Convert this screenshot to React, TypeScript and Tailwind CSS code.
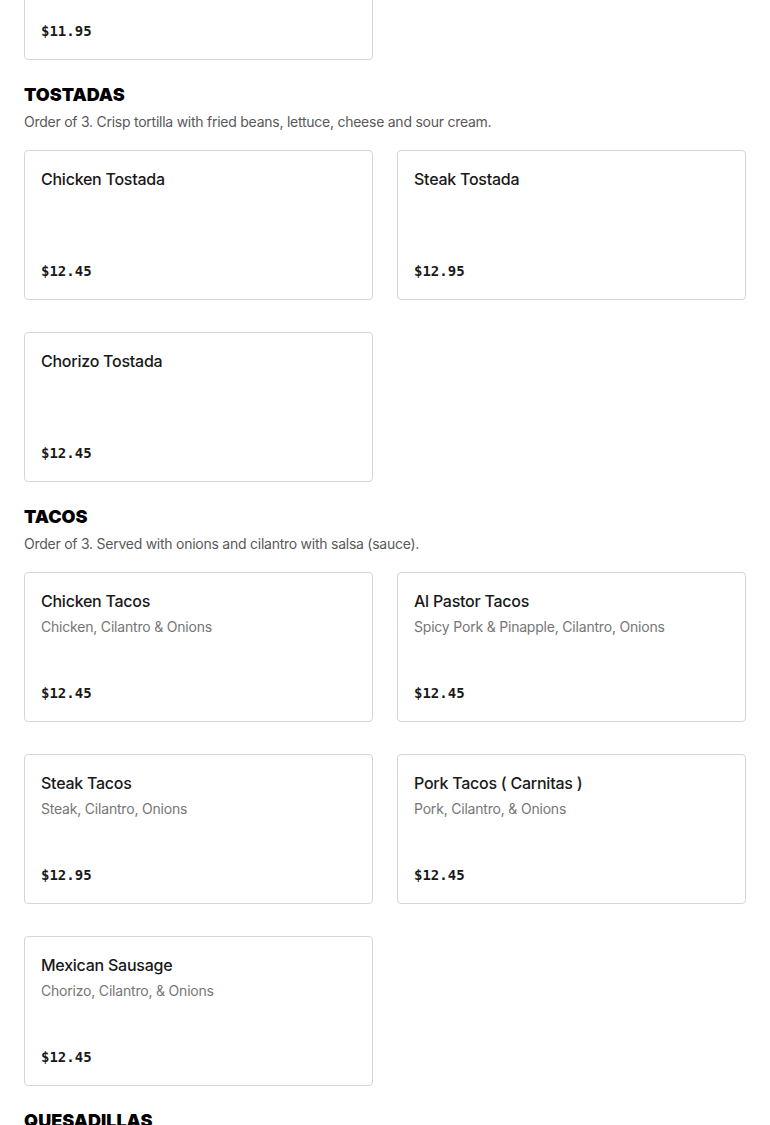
import React from "react";

type Item = { name: string; desc?: string; price: string };

const Card = ({ item, className = "" }: { item: Item; className?: string }) => (
  <div
    className={`h-[150px] flex flex-col justify-between rounded border border-[#d6d6d6] bg-white px-4 py-4 ${className}`}
  >
    <div>
      <div className="text-[16px] leading-6 font-medium tracking-[-0.25px] text-[#191919]">{item.name}</div>
      {item.desc && (
        <div className="mt-1 text-[14px] leading-5 tracking-[-0.2px] text-[#767676]">{item.desc}</div>
      )}
    </div>
    <div
      className="text-[14px] leading-6 font-bold text-[#191919]"
      style={{ fontFamily: '"DejaVu Sans Mono", "Liberation Mono", monospace' }}
    >
      {item.price}
    </div>
  </div>
);

const Section = ({ title, desc, items }: { title: string; desc: string; items: Item[] }) => (
  <section className="mt-[23px]">
    <h2 className="text-[18px] leading-6 font-black text-black">{title}</h2>
    <p className="mt-[5px] text-[14px] leading-5 tracking-[-0.25px] text-[#595959]">{desc}</p>
    <div className="mt-[18px] grid grid-cols-2 gap-x-6 gap-y-8">
      {items.map((it) => (
        <Card key={it.name} item={it} />
      ))}
    </div>
  </section>
);

export default function App() {
  return (
    <div
      className="min-h-screen bg-white px-6 overflow-hidden"
      style={{ fontFamily: 'Inter, "Noto Sans", sans-serif' }}
    >
      <div className="grid grid-cols-2 gap-x-6">
        <Card item={{ name: "", price: "$11.95" }} className="-mt-[90px]" />
      </div>
      <Section
        title="TOSTADAS"
        desc="Order of 3. Crisp tortilla with fried beans, lettuce, cheese and sour cream."
        items={[
          { name: "Chicken Tostada", price: "$12.45" },
          { name: "Steak Tostada", price: "$12.95" },
          { name: "Chorizo Tostada", price: "$12.45" },
        ]}
      />
      <Section
        title="TACOS"
        desc="Order of 3. Served with onions and cilantro with salsa (sauce)."
        items={[
          { name: "Chicken Tacos", desc: "Chicken, Cilantro & Onions", price: "$12.45" },
          { name: "Al Pastor Tacos", desc: "Spicy Pork & Pinapple, Cilantro, Onions", price: "$12.45" },
          { name: "Steak Tacos", desc: "Steak, Cilantro, Onions", price: "$12.95" },
          { name: "Pork Tacos ( Carnitas )", desc: "Pork, Cilantro, & Onions", price: "$12.45" },
          { name: "Mexican Sausage", desc: "Chorizo, Cilantro, & Onions", price: "$12.45" },
        ]}
      />
      <Section title="QUESADILLAS" desc="" items={[]} />
    </div>
  );
}
